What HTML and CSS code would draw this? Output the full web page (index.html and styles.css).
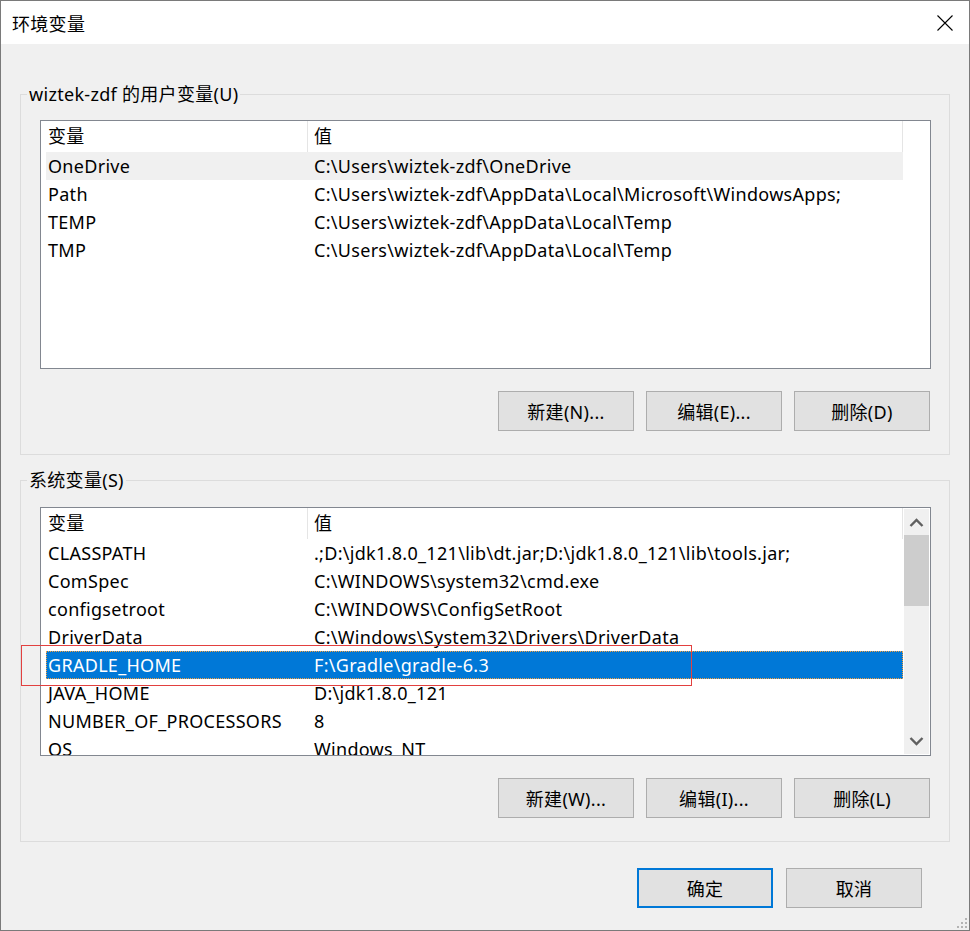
FILE: index.html
```html
<!DOCTYPE html>
<html lang="zh-CN">
<head>
    <meta charset="UTF-8">
    <title>环境变量</title>
    <link rel="stylesheet" href="styles.css">
</head>
<body>
    <div class="window">
        <div class="titlebar">
            <span class="title">环境变量</span>
            <svg class="close" width="16" height="16" viewBox="0 0 16 16">
                <path d="M0.5 0.5 L15.5 15.5 M15.5 0.5 L0.5 15.5" stroke="#000" stroke-width="1.1" fill="none"/>
            </svg>
        </div>

        <div class="content">
            <fieldset class="group group-user">
                <legend>wiztek-zdf 的用户变量(U)</legend>
                <div class="group-body">
                    <div class="list">
                        <div class="list-main">
                            <div class="list-head">
                                <div class="col-name">变量</div>
                                <div class="col-value">值</div>
                            </div>
                            <div class="row hover"><span class="cell-name">OneDrive</span><span class="cell-value">C:\Users\wiztek-zdf\OneDrive</span></div>
                            <div class="row"><span class="cell-name">Path</span><span class="cell-value">C:\Users\wiztek-zdf\AppData\Local\Microsoft\WindowsApps;</span></div>
                            <div class="row"><span class="cell-name">TEMP</span><span class="cell-value">C:\Users\wiztek-zdf\AppData\Local\Temp</span></div>
                            <div class="row"><span class="cell-name">TMP</span><span class="cell-value">C:\Users\wiztek-zdf\AppData\Local\Temp</span></div>
                        </div>
                    </div>
                    <div class="btn-row">
                        <button class="btn">新建(N)...</button>
                        <button class="btn">编辑(E)...</button>
                        <button class="btn">删除(D)</button>
                    </div>
                </div>
            </fieldset>

            <fieldset class="group group-system">
                <legend>系统变量(S)</legend>
                <div class="group-body">
                    <div class="list">
                        <div class="list-main">
                            <div class="list-head">
                                <div class="col-name">变量</div>
                                <div class="col-value">值</div>
                            </div>
                            <div class="row"><span class="cell-name">CLASSPATH</span><span class="cell-value">.;D:\jdk1.8.0_121\lib\dt.jar;D:\jdk1.8.0_121\lib\tools.jar;</span></div>
                            <div class="row"><span class="cell-name">ComSpec</span><span class="cell-value">C:\WINDOWS\system32\cmd.exe</span></div>
                            <div class="row"><span class="cell-name">configsetroot</span><span class="cell-value">C:\WINDOWS\ConfigSetRoot</span></div>
                            <div class="row"><span class="cell-name">DriverData</span><span class="cell-value">C:\Windows\System32\Drivers\DriverData</span></div>
                            <div class="row selected"><span class="cell-name">GRADLE_HOME</span><span class="cell-value">F:\Gradle\gradle-6.3</span></div>
                            <div class="row"><span class="cell-name">JAVA_HOME</span><span class="cell-value">D:\jdk1.8.0_121</span></div>
                            <div class="row"><span class="cell-name">NUMBER_OF_PROCESSORS</span><span class="cell-value">8</span></div>
                            <div class="row"><span class="cell-name">OS</span><span class="cell-value">Windows_NT</span></div>
                        </div>
                        <div class="scrollbar">
                            <div class="sb-btn">
                                <svg width="25" height="26" viewBox="0 0 25 26">
                                    <polyline points="6.5,17 12.5,11 18.5,17" stroke="#606060" stroke-width="2.4" fill="none"/>
                                </svg>
                            </div>
                            <div class="sb-thumb"></div>
                            <div class="sb-track"></div>
                            <div class="sb-btn">
                                <svg width="25" height="26" viewBox="0 0 25 26">
                                    <polyline points="6.5,10 12.5,16 18.5,10" stroke="#606060" stroke-width="2.4" fill="none"/>
                                </svg>
                            </div>
                        </div>
                    </div>
                    <div class="btn-row">
                        <button class="btn">新建(W)...</button>
                        <button class="btn">编辑(I)...</button>
                        <button class="btn">删除(L)</button>
                    </div>
                </div>
            </fieldset>

            <div class="footer">
                <button class="btn btn-default">确定</button>
                <button class="btn">取消</button>
            </div>
        </div>

        <div class="mark"></div>

        <svg class="grip" width="12" height="12" viewBox="0 0 12 12">
            <rect x="9" y="1" width="2" height="2" fill="#b4b4b4"/>
            <rect x="5" y="5" width="2" height="2" fill="#b4b4b4"/>
            <rect x="9" y="5" width="2" height="2" fill="#b4b4b4"/>
            <rect x="1" y="9" width="2" height="2" fill="#b4b4b4"/>
            <rect x="5" y="9" width="2" height="2" fill="#b4b4b4"/>
            <rect x="9" y="9" width="2" height="2" fill="#b4b4b4"/>
        </svg>
    </div>
</body>
</html>
```

FILE: styles.css
```css
* {
    box-sizing: border-box;
}

body {
    margin: 0;
    font-family: "Noto Sans", "Noto Sans CJK SC", sans-serif;
    font-size: 18px;
    letter-spacing: 0.3px;
    color: #000;
    background: #f0f0f0;
}

.window {
    position: relative;
    width: 970px;
    height: 931px;
    border: 1px solid #7a7a7a;
    background: #f0f0f0;
    display: flex;
    flex-direction: column;
    overflow: hidden;
}

.titlebar {
    height: 43px;
    flex-shrink: 0;
    background: #fff;
    display: flex;
    align-items: center;
    justify-content: space-between;
    padding: 0 16px 0 11px;
}

.close {
    display: block;
}

.content {
    padding: 0 19px;
}

/* group boxes */
.group {
    margin: 0;
    padding: 0;
    min-width: 0;
    border: 1px solid #dcdcdc;
}

.group-user {
    margin-top: 38px;
}

.group-system {
    margin-top: 13px;
}

.group legend {
    margin-left: 6px;
    padding: 0 2px;
    line-height: 24px;
}

.group-body {
    padding: 14px 18px 23px 19px;
}

.group-system .group-body {
    padding-top: 15px;
}

/* list views */
.list {
    height: 249px;
    border: 1px solid #828790;
    background: #fff;
    display: flex;
    overflow: hidden;
}

.list-main {
    flex: 1;
    min-width: 0;
    overflow: hidden;
}

.list-head {
    display: flex;
    height: 31px;
    line-height: 31px;
}

.list-head .col-name {
    width: 267px;
    padding-left: 7px;
    border-right: 1px solid #e5e5e5;
}

.list-head .col-value {
    width: 595px;
    padding-left: 6px;
    border-right: 1px solid #e5e5e5;
}

.row {
    display: flex;
    width: 857px;
    height: 28px;
    line-height: 28px;
    margin-left: 5px;
    padding-left: 2px;
    white-space: nowrap;
}

.row .cell-name {
    width: 266px;
    flex-shrink: 0;
}

.row.hover {
    background: #f0f0f0;
}

.row.selected {
    background: #0078d7;
    color: #fff;
    outline: 1px dotted #f5a040;
    outline-offset: -1px;
}

.scrollbar {
    width: 25px;
    flex-shrink: 0;
    margin: 1px 1px 1px 0;
    background: #f0f0f0;
    display: flex;
    flex-direction: column;
}

.sb-btn {
    height: 26px;
}

.sb-btn svg {
    display: block;
}

.sb-thumb {
    height: 71px;
    background: #cdcdcd;
}

.sb-track {
    flex: 1;
}

/* buttons */
.btn-row {
    display: flex;
    justify-content: flex-end;
    gap: 12px;
    margin-top: 22px;
    padding-right: 1px;
}

.btn {
    width: 136px;
    height: 40px;
    padding: 0;
    border: 1px solid #adadad;
    background: #e1e1e1;
    font: inherit;
    letter-spacing: inherit;
    color: #000;
}

.btn-default {
    border: 2px solid #0078d7;
}

.footer {
    display: flex;
    justify-content: flex-end;
    gap: 13px;
    margin-top: 26px;
    padding-right: 28px;
}

/* annotation drawn over the selected row */
.mark {
    position: absolute;
    left: 20px;
    top: 644px;
    width: 671px;
    height: 41px;
    border: 1px solid #e2403f;
}

.grip {
    position: absolute;
    right: 1px;
    bottom: 1px;
}
```
